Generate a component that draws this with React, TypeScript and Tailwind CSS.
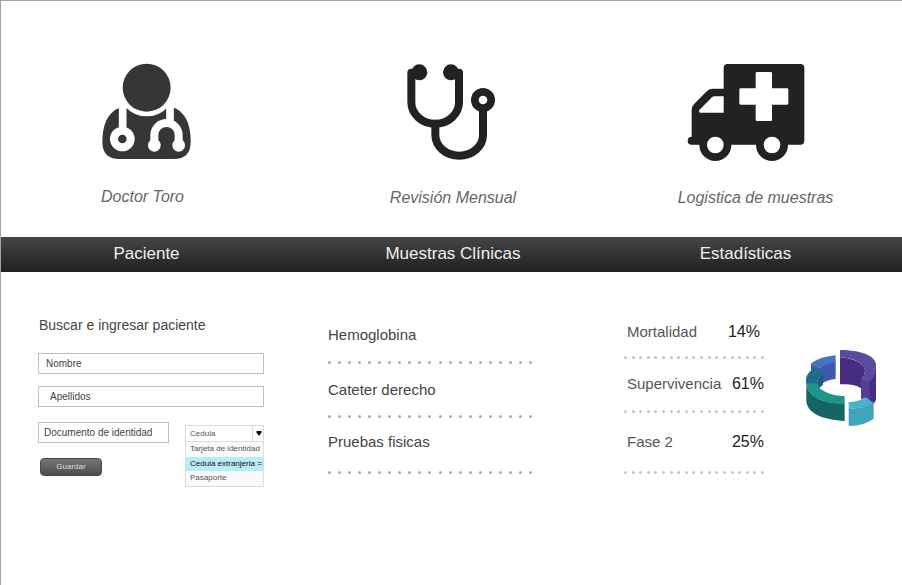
import type { ReactNode } from "react";

const COLUMNS = "grid grid-cols-[291fr_322fr_263fr] pr-[25px]";

function DoctorIcon() {
  return (
    <svg viewBox="36 25 267 291" className="h-[97px] w-[89px]" aria-hidden="true">
      <path
        d="M88 159C50 175 37 215 37 262Q37 313 88 313H251Q302 313 302 262C302 215 290 175 252 159Z"
        fill="#363636"
      />
      <circle cx="170" cy="99" r="86" fill="#fff" />
      <circle cx="170" cy="99" r="72" fill="#363636" />
      <g fill="none" stroke="#fff" strokeWidth="23">
        <path d="M98 150V225" />
        <path d="M240 150V205" />
        <path d="M193 270V241A36.5 36 0 0 1 266 241V270" strokeWidth="24" />
      </g>
      <g fill="#fff">
        <circle cx="97" cy="253" r="37" />
        <circle cx="193" cy="272" r="19" />
        <circle cx="266" cy="272" r="19" />
      </g>
      <circle cx="97" cy="253" r="13" fill="#363636" />
    </svg>
  );
}

function StethoscopeIcon() {
  return (
    <svg viewBox="67 22 279 294" className="h-[98px] w-[93px]" aria-hidden="true">
      <g fill="none" stroke="#222" strokeWidth="24" strokeLinecap="round">
        <path d="M80 51V140A71.5 64 0 0 0 223 140V51" />
        <path d="M152 204V238A71.5 62 0 0 0 295 238V150" />
      </g>
      <g fill="#222">
        <circle cx="104" cy="50" r="24" />
        <circle cx="199" cy="50" r="24" />
        <circle cx="295" cy="133" r="36" />
      </g>
      <circle cx="295" cy="133" r="13" fill="#fff" />
    </svg>
  );
}

function AmbulanceIcon() {
  return (
    <svg viewBox="52 25 354 297" className="h-[99px] w-[118px]" aria-hidden="true">
      <path
        d="M174 28H392Q404 28 404 40V258Q404 270 392 270H66Q54 270 54 258Q54 246 66 246V166Q66 155 74 147L112 109Q119 102 131 102H162V40Q162 28 174 28Z"
        fill="#222"
      />
      <circle cx="137" cy="271" r="48" fill="#222" />
      <circle cx="307" cy="271" r="48" fill="#222" />
      <g fill="#fff">
        <circle cx="137" cy="271" r="25" />
        <circle cx="307" cy="271" r="25" />
        <path d="M92 174Q88 174 88 170Q88 167 91 164L127 128Q130 125 134 125H162V174Z" />
        <rect x="258" y="52" width="49" height="147" rx="4" />
        <rect x="209" y="101" width="147" height="49" rx="4" />
      </g>
    </svg>
  );
}

function RingChart() {
  return (
    <svg viewBox="30 27 216 234" className="h-[78px] w-[72px]" role="img" aria-label="Estadísticas">
      <path d="M48 70Q78 49 122 46V68Q96 70 76 84Z" fill="#4674bd" />
      <path d="M75 84Q94 69 122 67V117Q98 119 82 131Z" fill="#3d5bae" />
      <path d="M48 70L76 84L84 98V106L57 92L48 96Z" fill="#3460ae" />
      <path d="M135 52C178 55 207 70 210 90Q211 104 198 120V145C184 134 162 131 135 133Z" fill="#472d80" />
      <path d="M135 30C197 31 238 45 243 72Q243 98 224 125L198 118C211 104 214 89 203 77C192 62 166 54 135 52Z" fill="#5b4b9d" />
      <path d="M198 117L225 124V182L213 173L198 178Z" fill="#583c9a" />
      <path d="M224 124Q243 98 243 72V180L236 192L224 182Z" fill="#482c89" />
      <path d="M34 132C29 110 41 94 57 86L84 98Q66 112 66 132Z" fill="#1e6b8b" />
      <path d="M84 97V134Q76 139 71 147Q66 139 66 130Q67 113 84 97Z" fill="#1b5f7d" />
      <path d="M34 130H66C70 151 105 167 149 169V192C90 191 38 174 34 130Z" fill="#1d948c" />
      <path d="M34 130C38 174 90 191 149 191V243C84 240 37 220 34 184Z" fill="#156563" />
      <path d="M161 186Q191 185 212 173L236 189Q208 207 165 205Z" fill="#46b4c8" />
      <path d="M161 186L165 205Q208 207 236 187V236Q207 257 165 258L161 256Z" fill="#40a4bd" />
    </svg>
  );
}

function Feature({ icon, label, shift }: { icon: ReactNode; label: string; shift: string }) {
  return (
    <figure className="flex flex-col items-center gap-6">
      {icon}
      <figcaption className={`text-base/6 text-[#666] italic ${shift}`}>{label}</figcaption>
    </figure>
  );
}

function Dots({ count, tone }: { count: number; tone: string }) {
  return (
    <div className="flex justify-between" aria-hidden="true">
      {Array.from({ length: count }, (_, i) => (
        <span key={i} className={`size-[3px] rounded-full ${tone}`} />
      ))}
    </div>
  );
}

const samples = [
  { name: "Hemoglobina", space: "pb-[14px]" },
  { name: "Cateter derecho", space: "pt-[14px] pb-[13px]" },
  { name: "Pruebas fisicas", space: "pt-3 pb-[17px]" },
];

const stats = [
  { name: "Mortalidad", value: "14%", space: "pb-3 pr-1" },
  { name: "Supervivencia", value: "61%", space: "pt-[13px] pb-[14px]" },
  { name: "Fase 2", value: "25%", space: "pt-[17px] pb-[17px]" },
];

const FIELD =
  "h-[21px] border border-[#bcbfbe] bg-white text-[10px] text-[#444] placeholder:text-[#444] placeholder:opacity-100";

function PatientForm() {
  return (
    <form className="pt-[42px] pr-7 pl-[37px]" onSubmit={(e) => e.preventDefault()}>
      <h2 className="pl-px text-[14px]/[22px] text-[#444]">Buscar e ingresar paciente</h2>
      <input aria-label="Nombre" placeholder="Nombre" className={`mt-[17px] block w-full px-[7px] ${FIELD}`} />
      <input aria-label="Apellidos" placeholder="Apellidos" className={`mt-3 block w-full px-[11px] ${FIELD}`} />
      <div className="mt-[15px] flex justify-between gap-4">
        <div className="min-w-0 flex-1">
          <input
            aria-label="Documento de identidad"
            placeholder="Documento de identidad"
            className={`block w-full px-[5px] ${FIELD}`}
          />
          <button
            type="submit"
            className="mt-[15px] ml-0.5 block h-[18px] w-[62px] rounded border border-[#4a4a4a] bg-linear-to-b from-[#777] to-[#4c4c4c] text-[8px]/[16px] text-[#ddd]"
          >
            Guardar
          </button>
        </div>
        <div className="relative mt-[3px] w-[79px]">
          <select
            aria-label="Tipo de documento"
            className="block h-[17px] w-full appearance-none border border-[#ddd] bg-white px-1 text-[8px]/[15px] text-[#555]"
          >
            <option>Cedula</option>
          </select>
          <span className="pointer-events-none absolute top-0 right-0 flex h-[17px] w-3 items-center justify-center border-l border-[#ddd]">
            <svg viewBox="0 0 6 5" className="h-[5px] w-1.5" aria-hidden="true">
              <path d="M0.5 0H5.5V1.5L3.5 4.5H2.5L0.5 1.5Z" fill="#111" />
            </svg>
          </span>
          <ul
            role="listbox"
            aria-label="Opciones"
            className="absolute top-[17px] left-0 w-full border border-t-0 border-[#ddd] bg-[#fafafa] text-[8px]/[14px] whitespace-nowrap text-[#555]"
          >
            <li role="option" aria-selected="false" className="h-[15px] pl-1">Tarjeta de identidad</li>
            <li role="option" aria-selected="true" className="h-[14px] bg-[#b8ebf2] pl-1 text-[#111]">
              Cedula extranjeria =
            </li>
            <li role="option" aria-selected="false" className="h-[15px] pl-1">Pasaporte</li>
          </ul>
        </div>
      </div>
    </form>
  );
}

export default function App() {
  return (
    <main className="min-h-screen border-t border-l border-[#a3a3a3] bg-white font-['Liberation_Sans',Arial,sans-serif]">
      <header className={`${COLUMNS} pt-[62px] pb-[27px]`}>
        <Feature icon={<DoctorIcon />} label="Doctor Toro" shift="pt-px pr-2" />
        <Feature icon={<StethoscopeIcon />} label="Revisión Mensual" shift="pt-px" />
        <Feature icon={<AmbulanceIcon />} label="Logistica de muestras" shift="pl-5" />
      </header>
      <nav className="bg-linear-to-b from-[#464646] to-[#212121]">
        <ul className={`${COLUMNS} pb-0.5 text-center text-[17px]/[33px] text-[#eee]`}>
          <li><a href="#paciente">Paciente</a></li>
          <li><a href="#muestras">Muestras Clínicas</a></li>
          <li><a href="#estadisticas">Estadísticas</a></li>
        </ul>
      </nav>
      <div className={COLUMNS}>
        <section id="paciente">
          <PatientForm />
        </section>
        <section id="muestras" className="pt-[51px] pl-9">
          <ul className="w-[204px]">
            {samples.map((s) => (
              <li key={s.name}>
                <p className={`text-[15px]/6 text-[#444] ${s.space}`}>{s.name}</p>
                <Dots count={21} tone="bg-[#aaa]" />
              </li>
            ))}
          </ul>
        </section>
        <section id="estadisticas" className="flex items-start justify-between pt-12 pl-[10px]">
          <ul className="w-[140px]">
            {stats.map((s) => (
              <li key={s.name}>
                <p className={`flex justify-between pl-[3px] text-[15px]/6 text-[#555] ${s.space}`}>
                  <span>{s.name}</span>
                  <span className="text-base/6 text-[#222]">{s.value}</span>
                </p>
                <Dots count={19} tone="bg-[#c4c4c4]" />
              </li>
            ))}
          </ul>
          <div className="mt-[29px]">
            <RingChart />
          </div>
        </section>
      </div>
    </main>
  );
}
